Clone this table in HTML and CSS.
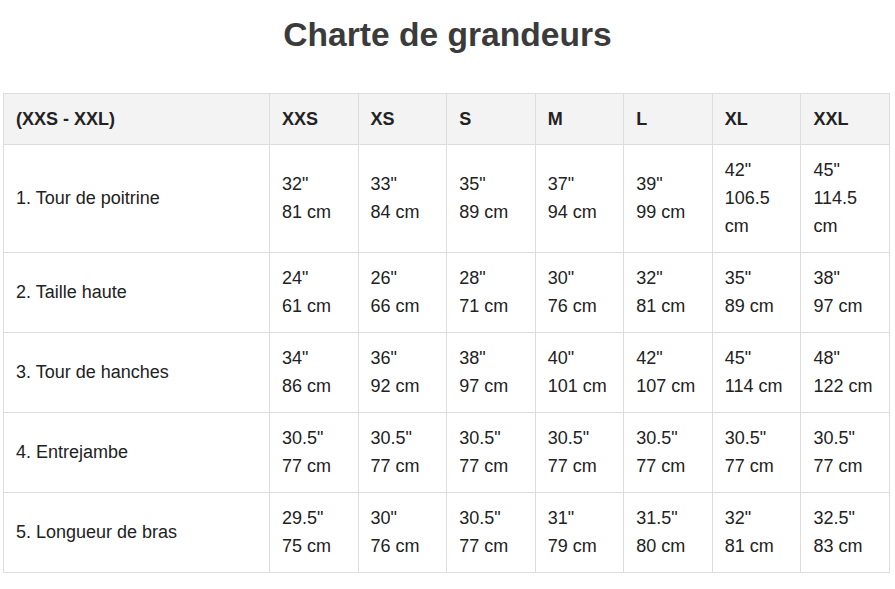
FILE: index.html
```html
<!DOCTYPE html>
<html lang="fr">
<head>
<meta charset="utf-8">
<title>Charte de grandeurs</title>
<link rel="stylesheet" href="styles.css">
</head>
<body>
<h1 class="title">Charte de grandeurs</h1>
<table class="chart">
  <colgroup>
    <col class="col-label">
    <col><col><col><col><col><col><col>
  </colgroup>
  <thead>
    <tr>
      <th>(XXS - XXL)</th><th>XXS</th><th>XS</th><th>S</th><th>M</th><th>L</th><th>XL</th><th>XXL</th>
    </tr>
  </thead>
  <tbody>
    <tr>
      <td>1. Tour de poitrine</td>
      <td>32"<br>81 cm</td><td>33"<br>84 cm</td><td>35"<br>89 cm</td><td>37"<br>94 cm</td><td>39"<br>99 cm</td><td>42"<br>106.5 cm</td><td>45"<br>114.5 cm</td>
    </tr>
    <tr>
      <td>2. Taille haute</td>
      <td>24"<br>61 cm</td><td>26"<br>66 cm</td><td>28"<br>71 cm</td><td>30"<br>76 cm</td><td>32"<br>81 cm</td><td>35"<br>89 cm</td><td>38"<br>97 cm</td>
    </tr>
    <tr>
      <td>3. Tour de hanches</td>
      <td>34"<br>86 cm</td><td>36"<br>92 cm</td><td>38"<br>97 cm</td><td>40"<br>101 cm</td><td>42"<br>107 cm</td><td>45"<br>114 cm</td><td>48"<br>122 cm</td>
    </tr>
    <tr>
      <td>4. Entrejambe</td>
      <td>30.5"<br>77 cm</td><td>30.5"<br>77 cm</td><td>30.5"<br>77 cm</td><td>30.5"<br>77 cm</td><td>30.5"<br>77 cm</td><td>30.5"<br>77 cm</td><td>30.5"<br>77 cm</td>
    </tr>
    <tr>
      <td>5. Longueur de bras</td>
      <td>29.5"<br>75 cm</td><td>30"<br>76 cm</td><td>30.5"<br>77 cm</td><td>31"<br>79 cm</td><td>31.5"<br>80 cm</td><td>32"<br>81 cm</td><td>32.5"<br>83 cm</td>
    </tr>
  </tbody>
</table>
</body>
</html>
```
FILE: styles.css
```css
html, body {
  margin: 0;
  padding: 0;
  background: #ffffff;
}

body {
  font-family: "Liberation Sans", Arial, sans-serif;
  color: #222222;
}

.title {
  margin: 15px 0 38px;
  font-size: 33.6px;
  line-height: 40px;
  font-weight: bold;
  color: #3b3b3b;
  text-align: center;
}

.chart {
  margin-left: 3px;
  width: 887px;
  border-collapse: collapse;
  table-layout: fixed;
  font-size: 18px;
  line-height: 28px;
}

.col-label {
  width: 266px;
}

.chart th,
.chart td {
  border: 1px solid #dddddd;
  padding: 11px 12px 12px;
  text-align: left;
  vertical-align: middle;
}

.chart th {
  background: #f3f3f3;
  font-weight: bold;
  color: #222222;
  padding: 11px 12px 11px;
}
```
